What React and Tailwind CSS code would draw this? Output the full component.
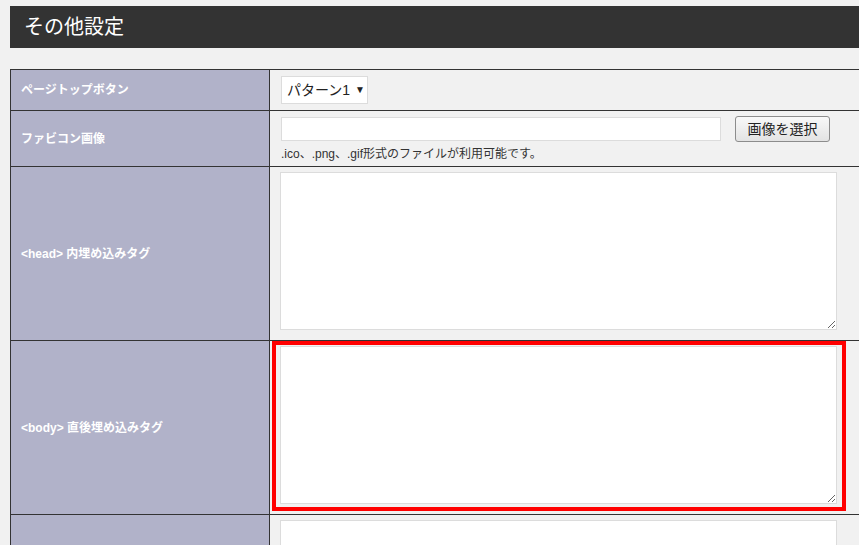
import React from 'react';

const jp = { fontFamily: '"Liberation Sans", "Noto Sans CJK JP", sans-serif' };

const Label = ({ children, h }) => (
  <div className={`w-[259px] shrink-0 bg-[#b1b2c9] border-r border-[#333] flex items-center pl-[10px] text-white font-bold text-[12px] leading-none ${h}`}>
    {children}
  </div>
);

const Area = () => (
  <textarea className="block w-[557px] h-[158px] bg-white border border-[#dcdcdc] outline-none resize" />
);

export default function App() {
  return (
    <div style={jp} className="w-[859px] h-[545px] overflow-hidden bg-[#f1f1f1] pt-[6px] pl-[10px] text-[#333]">
      <div className="w-[880px]">
        <div className="h-[42px] bg-[#333] flex items-center pl-[14px]">
          <h1 className="text-white text-[20px] leading-none">その他設定</h1>
        </div>

        <div className="mt-[21px] border-t border-l border-[#333]">
          {/* page top button */}
          <div className="flex border-b border-[#333]">
            <Label h="h-[40px]">ページトップボタン</Label>
            <div className="flex-1 pl-[11px] pt-[6px]">
              <div className="w-[87px] h-[28px] bg-white border border-[#dcdcdc] flex items-center pl-[5px] text-[14px] text-[#222] leading-none whitespace-nowrap">
                パターン1
                <span className="ml-[5px] text-[10px]">▼</span>
              </div>
            </div>
          </div>

          {/* favicon */}
          <div className="flex border-b border-[#333]">
            <Label h="h-[55px]">ファビコン画像</Label>
            <div className="flex-1 pl-[11px] pt-[5px]">
              <div className="flex items-center gap-[14px]">
                <div className="w-[440px] h-[24px] bg-white border border-[#dcdcdc]" />
                <button className="w-[95px] h-[26px] rounded-[3px] border border-[#8c8c8c] bg-gradient-to-b from-[#f8f8f8] to-[#e3e3e3] text-[14px] text-[#222] leading-none">
                  画像を選択
                </button>
              </div>
              <p className="mt-[5px] text-[12px] leading-[14px] text-[#333]">.ico、.png、.gif形式のファイルが利用可能です。</p>
            </div>
          </div>

          {/* head tag */}
          <div className="flex border-b border-[#333]">
            <Label h="h-[173px]">&lt;head&gt; 内埋め込みタグ</Label>
            <div className="flex-1 pl-[10px] pt-[5px]">
              <Area />
            </div>
          </div>

          {/* body tag */}
          <div className="flex border-b border-[#333]">
            <Label h="h-[173px]">&lt;body&gt; 直後埋め込みタグ</Label>
            <div className="flex-1 pl-[10px] pt-[5px] relative">
              <Area />
              <div className="absolute left-[2px] top-0 w-[574px] h-[170px] border-[4px] border-[#ff0000] pointer-events-none" />
            </div>
          </div>

          {/* next */}
          <div className="flex border-b border-[#333]">
            <Label h="h-[173px]"></Label>
            <div className="flex-1 pl-[10px] pt-[5px]">
              <Area />
            </div>
          </div>
        </div>
      </div>
    </div>
  );
}
